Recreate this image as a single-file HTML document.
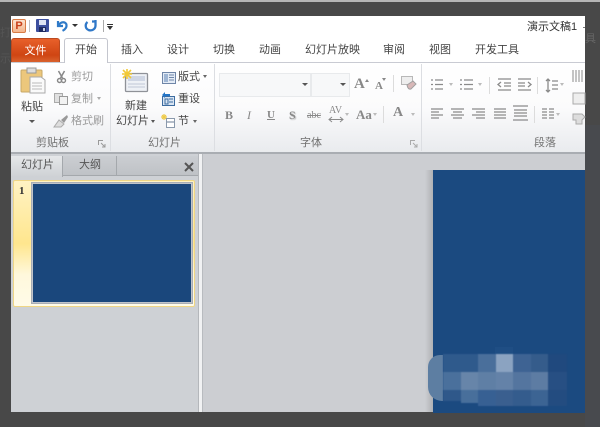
<!DOCTYPE html>
<html lang="zh"><head><meta charset="utf-8"><style>
html,body{margin:0;padding:0}
#p{position:relative;width:600px;height:427px;overflow:hidden;background:#484848;font-family:"Liberation Sans","Noto Sans CJK SC",sans-serif;color:#444}
#p *{box-sizing:border-box}
.a{position:absolute;white-space:nowrap}
.t{font-size:11px;line-height:14px;color:#444;filter:blur(.35px)}
.g{color:#9a9a9a}
.gl{font-size:11px;line-height:14px;color:#707070;filter:blur(.35px)}
svg{position:absolute;overflow:visible}
.i{filter:blur(.35px)}
.s{font-family:"Liberation Serif",serif;color:#888;filter:blur(.3px)}
</style></head><body><div id="p">
<div class="a" style="left:0;top:0;width:600px;height:2px;background:#b5b5b5"></div>
<div class="a" style="left:0;top:24px;font-size:11px;color:#555">打</div>
<div class="a" style="left:0;top:50px;font-size:11px;color:#555">示</div>
<div class="a" style="left:585px;top:30px;font-size:11px;color:#666">具</div>
<div class="a" style="left:585px;top:125px;width:15px;height:302px;background:#484a4e"></div>

<!-- window -->
<div class="a" style="left:11px;top:16px;width:574px;height:396px;background:#cdd0d4;overflow:hidden"></div>
<div class="a" style="left:11px;top:16px;width:574px;height:46px;background:#fff"></div>
<div class="a" style="left:11px;top:62px;width:574px;height:92px;background:linear-gradient(#fff 0,#fbfbfc 50%,#e9ebee 100%);border-top:1px solid #c9cbd3;border-bottom:2px solid #a9adb2"></div>

<!-- QAT -->
<div class="a i" style="left:12px;top:19px;width:14px;height:14px;background:linear-gradient(#fce3cf,#f3b48b);border:1px solid #d77b45;border-radius:2px;color:#c8401a;font:bold 11px/12px 'Liberation Sans';text-align:center">P</div>
<div class="a" style="left:29px;top:20px;width:1px;height:12px;background:#c4c4c4"></div>
<svg class="i" style="left:36px;top:19px" width="13" height="13"><rect width="13" height="13" rx="1" fill="#3c4f9e"/><rect x="3" y="1" width="7" height="5" fill="#dfe4f4"/><rect x="3" y="8" width="7" height="5" fill="#1e2a60"/><rect x="7" y="9" width="2" height="3" fill="#c8d0e8"/></svg>
<svg class="i" style="left:55px;top:19px" width="14" height="13"><path d="M3 2 L3 7 L8 7 M3.500 6.500 C6 2 11 2.500 11.500 6 C11.800 8.500 10 10.500 7.500 11.800" fill="none" stroke="#2f7ac8" stroke-width="2.200"/></svg>
<div class="a" style="left:72px;top:24px;width:0;height:0;border:3px solid transparent;border-top:3px solid #333"></div>
<svg class="i" style="left:84px;top:19px" width="13" height="13"><path d="M3.500 3 C1 5 1 9.500 4.500 11 C8 12.300 11.500 10 11.500 6.500 L11.500 1 M11.500 2.500 L8 2.500" fill="none" stroke="#3078c8" stroke-width="2.300"/></svg>
<div class="a" style="left:103px;top:20px;width:1px;height:12px;background:#aaa"></div>
<div class="a" style="left:107px;top:24px;width:6px;height:1px;background:#333"></div>
<div class="a" style="left:107px;top:26px;width:0;height:0;border:3px solid transparent;border-top:4px solid #333"></div>
<div class="a t" style="left:527px;top:20px;color:#333">演示文稿1</div>
<div class="a" style="left:583px;top:27px;width:2px;height:1px;background:#777"></div>

<!-- tabs -->
<div class="a" style="left:11px;top:38px;width:49px;height:24px;background:linear-gradient(#e8602a,#cf4513 70%,#d9622e);border-radius:3px 3px 0 0;color:#fff;font-size:11px;line-height:24px;text-align:center;border:1px solid #bb4a20;border-bottom:0">文件</div>
<div class="a" style="left:64px;top:38px;width:44px;height:25px;background:#fff;border:1px solid #c4c6ce;border-bottom:0;border-radius:3px 3px 0 0"></div>
<div class="a t" style="left:75px;top:43px">开始</div>
<div class="a t" style="left:121px;top:43px">插入</div>
<div class="a t" style="left:167px;top:43px">设计</div>
<div class="a t" style="left:213px;top:43px">切换</div>
<div class="a t" style="left:259px;top:43px">动画</div>
<div class="a t" style="left:305px;top:43px">幻灯片放映</div>
<div class="a t" style="left:383px;top:43px">审阅</div>
<div class="a t" style="left:429px;top:43px">视图</div>
<div class="a t" style="left:475px;top:43px">开发工具</div>

<!-- group dividers -->
<div class="a" style="left:110px;top:64px;width:1px;height:87px;background:#dcdee2"></div>
<div class="a" style="left:214px;top:64px;width:1px;height:87px;background:#dcdee2"></div>
<div class="a" style="left:421px;top:64px;width:1px;height:87px;background:#dcdee2"></div>

<!-- clipboard -->
<svg class="i" style="left:21px;top:68px" width="24" height="26"><rect y="2" width="21" height="22" rx="1" fill="#ecc77c" stroke="#c8a866"/><rect x="6" y="0" width="9" height="5" fill="#ddd" stroke="#999"/><path d="M9 9 h11 l4 3 v13 h-15z" fill="#fafafa" stroke="#aaa"/><path d="M11 15h10M11 18h10M11 21h10" stroke="#bbb"/></svg>
<div class="a t" style="left:21px;top:100px">粘贴</div>
<div class="a" style="left:29px;top:120px;border:3px solid transparent;border-top:3px solid #555"></div>
<svg class="i" style="left:57px;top:71px" width="9" height="12"><path d="M1.500 0 L5.500 7 M7.500 0 L3.500 7" stroke="#888" stroke-width="1.500"/><circle cx="2.500" cy="9.500" r="2" fill="none" stroke="#888" stroke-width="1.400"/><circle cx="6.500" cy="9.500" r="2" fill="none" stroke="#888" stroke-width="1.400"/></svg>
<svg class="i" style="left:54px;top:93px" width="14" height="12"><rect x="0.500" y="0.500" width="8" height="9" fill="#e0e0e0" stroke="#aaa"/><rect x="5.500" y="3.500" width="8" height="8" fill="#f2f2f2" stroke="#999"/></svg>
<svg class="i" style="left:54px;top:114px" width="15" height="14"><path d="M0 13 L5 6 L10 10 L7 13z" fill="#ddd" stroke="#aaa"/><path d="M7 6 L13 1 L14 3 L10 9z" fill="#999"/></svg>
<div class="a t g" style="left:71px;top:70px">剪切</div>
<div class="a t g" style="left:71px;top:92px">复制</div>
<div class="a" style="left:97px;top:97px;border:2.500px solid transparent;border-top:3px solid #aaa"></div>
<div class="a t g" style="left:71px;top:114px">格式刷</div>
<div class="a gl" style="left:36px;top:136px">剪贴板</div>
<svg style="left:98px;top:140px" width="8" height="8"><path d="M.5 5V.5H5M3 3L7 7M7 4V7H4" fill="none" stroke="#999"/></svg>

<!-- slides -->
<svg class="i" style="left:122px;top:69px" width="27" height="24"><rect x="3.500" y="4.500" width="22" height="18" rx="1" fill="#eef1f6" stroke="#8f9298" stroke-width="1.300"/><rect x="6" y="7" width="17" height="5" fill="#cfd6e4"/><path d="M6 15h17M6 18h17" stroke="#c0c8d6"/><path d="M1 1L9 9M9 1L1 9M5 0V10M0 5H10" stroke="#f2c936" stroke-width="1.600"/></svg>
<div class="a t" style="left:125px;top:99px">新建</div>
<div class="a t" style="left:116px;top:114px">幻灯片</div>
<div class="a" style="left:151px;top:120px;border:2.500px solid transparent;border-top:3px solid #555"></div>
<svg class="i" style="left:162px;top:72px" width="14" height="12"><rect x=".5" y=".5" width="13" height="11" fill="#e4ecf6" stroke="#6f86a8"/><rect x="2" y="2" width="4" height="8" fill="#9fb6d4"/><path d="M7 3h5M7 5.500h5M7 8h5" stroke="#6f86a8"/></svg>
<svg class="i" style="left:161px;top:92px" width="15" height="14"><rect x="1.500" y="4.500" width="12" height="9" fill="#d8e4f2" stroke="#3d6ca0"/><path d="M4 7h3v5H4zM8 7h4M8 10h4" stroke="#3d6ca0" fill="none"/><path d="M1 3L4 0V2H9V4H4V6Z" fill="#2374c6"/></svg>
<svg class="i" style="left:161px;top:114px" width="15" height="14"><path d="M0 3h6M3 0v6M1 1l4 4M5 1L1 5" stroke="#eecb4a" stroke-width="1.200"/><rect x="5.500" y="4.500" width="8" height="9" fill="#fff" stroke="#8a99ac"/><path d="M6 8h7" stroke="#6b7d95"/></svg>
<div class="a t" style="left:178px;top:70px">版式</div>
<div class="a" style="left:203px;top:75px;border:2.500px solid transparent;border-top:3px solid #666"></div>
<div class="a t" style="left:178px;top:92px">重设</div>
<div class="a t" style="left:178px;top:114px">节</div>
<div class="a" style="left:193px;top:120px;border:2.500px solid transparent;border-top:3px solid #666"></div>
<div class="a gl" style="left:148px;top:136px">幻灯片</div>

<!-- font -->
<div class="a" style="left:219px;top:73px;width:92px;height:24px;background:#f7f8f9;border:1px solid #e8eaec"></div>
<div class="a" style="left:311px;top:73px;width:39px;height:24px;background:#f7f8f9;border:1px solid #e8eaec"></div>
<div class="a" style="left:302px;top:83px;border:3px solid transparent;border-top:3px solid #555"></div>
<div class="a" style="left:340px;top:83px;border:3px solid transparent;border-top:3px solid #555"></div>
<div class="a s" style="left:354px;top:76px;font-size:15px;font-weight:bold;line-height:16px">A</div>
<div class="a" style="left:365px;top:77px;border:2px solid transparent;border-bottom:3px solid #888"></div>
<div class="a s" style="left:375px;top:79px;font-size:11px;font-weight:bold;line-height:14px">A</div>
<div class="a" style="left:382px;top:78px;border:2px solid transparent;border-top:3px solid #888"></div>
<div class="a" style="left:393px;top:75px;width:1px;height:17px;background:#dcdcdc"></div>
<svg class="i" style="left:401px;top:76px" width="16" height="15"><rect x=".5" y=".5" width="11" height="8" fill="#eee" stroke="#b8b8b8"/><path d="M6 9L12 5L15 8L10 13Q7 14 6 9Z" fill="#d8b8b8" stroke="#a0a0a0"/></svg>
<div class="a s" style="left:225px;top:108px;font-size:12px;font-weight:bold;line-height:14px">B</div>
<div class="a s" style="left:247px;top:108px;font-size:12px;font-style:italic;line-height:14px">I</div>
<div class="a s" style="left:267px;top:108px;font-size:11px;font-weight:bold;line-height:14px;text-decoration:underline">U</div>
<div class="a s" style="left:289px;top:108px;font-size:12px;font-weight:bold;line-height:14px;text-shadow:1px 1px 1px #bbb">S</div>
<div class="a s" style="left:307px;top:109px;font-size:10px;line-height:14px;text-decoration:line-through">abc</div>
<div class="a s" style="left:329px;top:105px;font-size:10px;line-height:11px">AV</div>
<svg style="left:329px;top:117px" width="14" height="5"><path d="M0 2.500H14M3 0L0 2.500L3 5M11 0L14 2.500L11 5" fill="none" stroke="#8a8a8a"/></svg>
<div class="a" style="left:345px;top:113px;border:2.500px solid transparent;border-top:3px solid #bbb"></div>
<div class="a s" style="left:356px;top:108px;font-size:13px;font-weight:bold;line-height:14px">Aa</div>
<div class="a" style="left:373px;top:113px;border:2.500px solid transparent;border-top:3px solid #bbb"></div>
<div class="a" style="left:383px;top:106px;width:1px;height:17px;background:#dcdcdc"></div>
<div class="a s" style="left:393px;top:105px;font-size:14px;font-weight:bold;line-height:16px">A</div>
<div class="a" style="left:411px;top:113px;border:2.500px solid transparent;border-top:3px solid #bbb"></div>
<div class="a gl" style="left:300px;top:136px">字体</div>
<svg style="left:410px;top:140px" width="8" height="8"><path d="M.5 5V.5H5M3 3L7 7M7 4V7H4" fill="none" stroke="#aaa"/></svg>

<!-- paragraph -->
<svg class="i" style="left:431px;top:76px" width="135" height="48" fill="none" stroke="#8a8a8a">
<path d="M0 4h2M0 8.500h2M0 13h2M4 4h8M4 8.500h8M4 13h8" stroke-width="1.300"/>
<path d="M29 4h2M29 8.500h2M29 13h2M33 4h9M33 8.500h9M33 13h9" stroke-width="1.300"/>
<path d="M67 3h13M73 7h7M73 10h7M67 14h13M70 6l-3 2.500 3 2.500" stroke-width="1.300"/>
<path d="M87 3h13M87 7h7M87 10h7M87 14h13M97 6l3 2.500-3 2.500" stroke-width="1.300"/>
<path d="M117 3v13M115 5l2-2 2 2M115 14l2 2 2-2M121 5h6M121 9h6M121 13h6" stroke-width="1.300"/>
<path d="M0 33h12M0 36h8M0 39h12M0 42h8" stroke-width="1.200"/>
<path d="M20 33h13M22 36h9M20 39h13M22 42h9" stroke-width="1.200"/>
<path d="M41 33h13M45 36h9M41 39h13M45 42h9" stroke-width="1.200"/>
<path d="M63 33h12M63 36h12M63 39h12M63 42h12" stroke-width="1.200"/>
<path d="M82 30h15M83 34h13M83 37h13M83 40h13M82 44h15" stroke-width="1.200"/>
<path d="M111 33h5M111 36h5M111 39h5M111 42h5M118 33h5M118 36h5M118 39h5M118 42h5" stroke-width="1.200"/>
</svg>
<div class="a" style="left:449px;top:83px;border:2.500px solid transparent;border-top:3px solid #bbb"></div>
<div class="a" style="left:478px;top:83px;border:2.500px solid transparent;border-top:3px solid #bbb"></div>
<div class="a" style="left:560px;top:83px;border:2.500px solid transparent;border-top:3px solid #bbb"></div>
<div class="a" style="left:556px;top:113px;border:2.500px solid transparent;border-top:3px solid #bbb"></div>
<div class="a" style="left:489px;top:77px;width:1px;height:17px;background:#dcdcdc"></div>
<div class="a" style="left:537px;top:77px;width:1px;height:17px;background:#dcdcdc"></div>
<div class="a" style="left:534px;top:106px;width:1px;height:17px;background:#dcdcdc"></div>
<svg class="i" style="left:572px;top:68px" width="13" height="60"><path d="M1 2v12M4 2v12M7 2v12M10 2v12" stroke="#8a8a8a"/><rect x="1" y="25" width="12" height="11" fill="#eee" stroke="#aaa"/><path d="M1 46h9l3 3-3 3v4H4v-4H1z" fill="#ddd" stroke="#aaa"/></svg>
<div class="a gl" style="left:534px;top:136px">段落</div>

<!-- left pane -->
<div class="a" style="left:11px;top:154px;width:187px;height:258px;background:#ced1d5"></div>
<div class="a" style="left:11px;top:156px;width:187px;height:20px;background:linear-gradient(#cbced2,#bfc2c6);border-bottom:1px solid #a4a8ac"></div>
<div class="a" style="left:11px;top:156px;width:52px;height:21px;background:linear-gradient(#e6e8ea,#ced1d5);border-right:1px solid #a4a8ac"></div>
<div class="a" style="left:116px;top:156px;width:1px;height:20px;background:#a4a8ac"></div>
<div class="a t" style="left:21px;top:158px;color:#555">幻灯片</div>
<div class="a t" style="left:79px;top:158px;color:#555">大纲</div>
<svg style="left:184px;top:162px" width="10" height="10"><path d="M1 1L9 9M9 1L1 9" stroke="#555" stroke-width="2"/></svg>
<div class="a" style="left:13px;top:180px;width:182px;height:127px;background:linear-gradient(#fff3c4 0,#ffe68e 50%,#fff8dc 75%,#fffbe8 100%);border:1px solid #efd685;border-radius:2px"></div>
<div class="a" style="left:19px;top:184px;font:bold 11px/14px 'Liberation Serif';color:#333">1</div>
<div class="a" style="left:32px;top:183px;width:160px;height:120px;background:#1a477c;border:1px solid #c0c4ca;outline:1px solid #a8adb4"></div>
<div class="a" style="left:198px;top:154px;width:5px;height:258px;background:#f1f2f3;border-left:1px solid #b4b7bb;border-right:1px solid #b8bbbf"></div>

<!-- main slide -->
<div class="a" style="left:203px;top:154px;width:382px;height:258px;background:#ccced2"></div>
<div class="a" style="left:425px;top:170px;width:8px;height:242px;background:linear-gradient(90deg,rgba(0,0,0,0),rgba(0,0,0,.14))"></div>
<div class="a" style="left:433px;top:170px;width:152px;height:243px;background:#1b4a80"></div>

<!-- mosaic -->
<div class="a" style="left:428px;top:355px;width:15px;height:46px;background:#5d7ea2;border-radius:12px 0 0 14px"></div>
<div class="a" style="left:495px;top:347px;width:18px;height:7px;background:#1f4e84"></div>
<svg style="left:443px;top:354px;filter:blur(.4px)" width="124" height="52" shape-rendering="crispEdges">
<rect x="0" y="0" width="35" height="18" fill="#2f5a8c"/><rect x="35" y="0" width="18" height="18" fill="#4a6f9b"/><rect x="53" y="0" width="17" height="18" fill="#8ba3c1"/><rect x="70" y="0" width="18" height="18" fill="#3e6393"/><rect x="88" y="0" width="17" height="18" fill="#355c8b"/><rect x="105" y="0" width="19" height="18" fill="#20497e"/>
<rect x="0" y="18" width="18" height="18" fill="#4a709c"/><rect x="18" y="18" width="17" height="18" fill="#6785a9"/><rect x="35" y="18" width="18" height="18" fill="#5f7fa5"/><rect x="53" y="18" width="17" height="18" fill="#6482a8"/><rect x="70" y="18" width="18" height="18" fill="#54759f"/><rect x="88" y="18" width="17" height="18" fill="#5d7ca3"/><rect x="105" y="18" width="19" height="18" fill="#274f83"/>
<rect x="0" y="36" width="18" height="11" fill="#2f588a"/><rect x="18" y="36" width="17" height="13" fill="#486f9b"/><rect x="35" y="36" width="18" height="16" fill="#376093"/><rect x="53" y="36" width="17" height="16" fill="#3a5f8f"/><rect x="70" y="36" width="18" height="16" fill="#345c8d"/><rect x="88" y="36" width="17" height="16" fill="#3c6493"/><rect x="105" y="36" width="19" height="16" fill="#234c80"/>
</svg>
</div></body></html>
